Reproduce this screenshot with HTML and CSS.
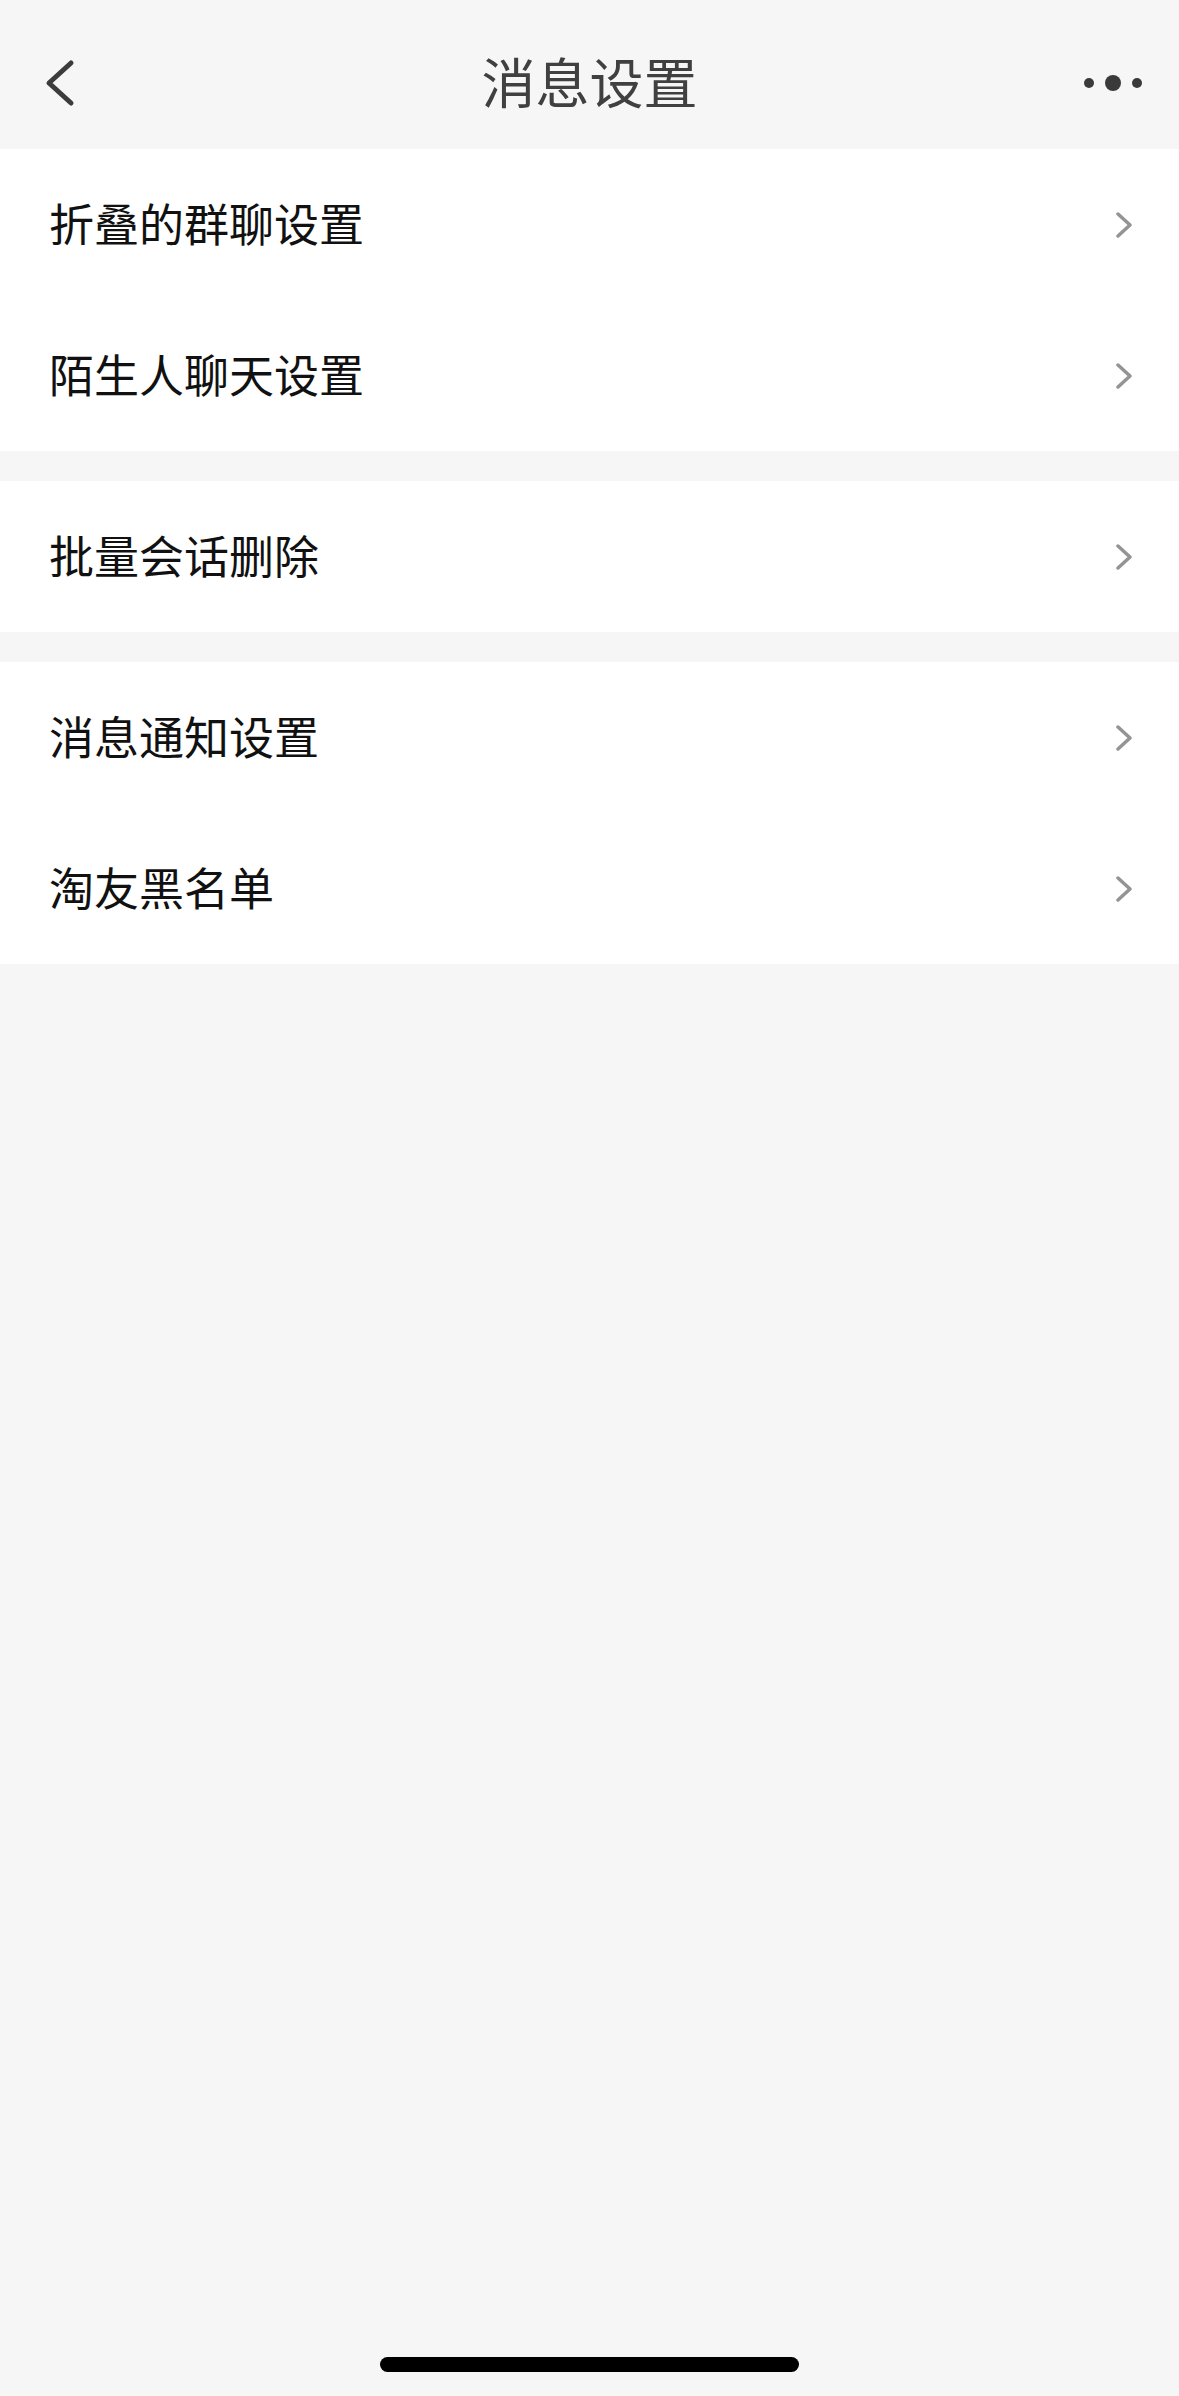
FILE: index.html
```html
<!DOCTYPE html>
<html lang="zh-CN">
<head>
    <meta charset="UTF-8">
    <meta name="viewport" content="width=device-width, initial-scale=1.0">
    <title>消息设置</title>
    <link rel="stylesheet" href="styles.css">
</head>
<body>
    <!-- Top navigation bar -->
    <header class="nav">
        <div class="nav-left">
            <svg class="back" width="32" height="50" viewBox="0 0 32 50">
                <polyline points="26,5 4,25 26,45" />
            </svg>
        </div>
        <h1 class="nav-title">消息设置</h1>
        <div class="nav-right">
            <svg class="more" width="58" height="20" viewBox="0 0 58 20">
                <circle cx="5" cy="10" r="5" />
                <circle cx="29" cy="10" r="8" />
                <circle cx="53" cy="10" r="5" />
            </svg>
        </div>
    </header>

    <!-- Setting groups -->
    <main class="groups">
        <section class="group">
            <div class="row"><span class="row-label">折叠的群聊设置</span><svg class="chevron" width="16" height="26" viewBox="0 0 16 26"><polyline points="2,2 14,13 2,24" /></svg></div>
            <div class="row"><span class="row-label">陌生人聊天设置</span><svg class="chevron" width="16" height="26" viewBox="0 0 16 26"><polyline points="2,2 14,13 2,24" /></svg></div>
        </section>

        <section class="group">
            <div class="row"><span class="row-label">批量会话删除</span><svg class="chevron" width="16" height="26" viewBox="0 0 16 26"><polyline points="2,2 14,13 2,24" /></svg></div>
        </section>

        <section class="group">
            <div class="row"><span class="row-label">消息通知设置</span><svg class="chevron" width="16" height="26" viewBox="0 0 16 26"><polyline points="2,2 14,13 2,24" /></svg></div>
            <div class="row"><span class="row-label">淘友黑名单</span><svg class="chevron" width="16" height="26" viewBox="0 0 16 26"><polyline points="2,2 14,13 2,24" /></svg></div>
        </section>
    </main>

    <!-- iOS home indicator -->
    <div class="home-bar"></div>
</body>
</html>
```

FILE: styles.css
```css
body {
    margin: 0;
    height: 100vh;
    display: flex;
    flex-direction: column;
    background-color: #f6f6f6;
    font-family: "Noto Sans CJK SC", "Noto Sans", sans-serif;
    color: #111111;
}

/* Navigation bar */
.nav {
    height: 149px;
    padding-top: 16px;
    box-sizing: border-box;
    display: flex;
    align-items: center;
    background-color: #f6f6f6;
}

.nav-left,
.nav-right {
    width: 150px;
    display: flex;
    align-items: center;
}

.nav-left {
    padding-left: 45px;
    box-sizing: border-box;
}

.nav-right {
    justify-content: flex-end;
    padding-right: 37px;
    box-sizing: border-box;
}

.back polyline {
    fill: none;
    stroke: #3c3c3c;
    stroke-width: 5;
    stroke-linecap: round;
    stroke-linejoin: round;
}

.more circle {
    fill: #3a3a3a;
}

.nav-title {
    flex: 1;
    margin: 0 0 3px;
    text-align: center;
    font-size: 54px;
    font-weight: 400;
    line-height: 1;
    color: #404040;
}

/* Groups of rows */
.groups {
    display: flex;
    flex-direction: column;
    gap: 30px;
}

.group {
    background-color: #ffffff;
}

.row {
    height: 151px;
    padding: 0 47px 0 49px;
    display: flex;
    align-items: center;
    justify-content: space-between;
}

.row-label {
    font-size: 45px;
    line-height: 1;
    margin-bottom: 5px;
}

.chevron polyline {
    fill: none;
    stroke: #949494;
    stroke-width: 3.5;
    stroke-linecap: round;
    stroke-linejoin: round;
}

/* Home indicator */
.home-bar {
    margin: auto auto 24px;
    width: 419px;
    height: 15px;
    border-radius: 8px;
    background-color: #000000;
}
```
